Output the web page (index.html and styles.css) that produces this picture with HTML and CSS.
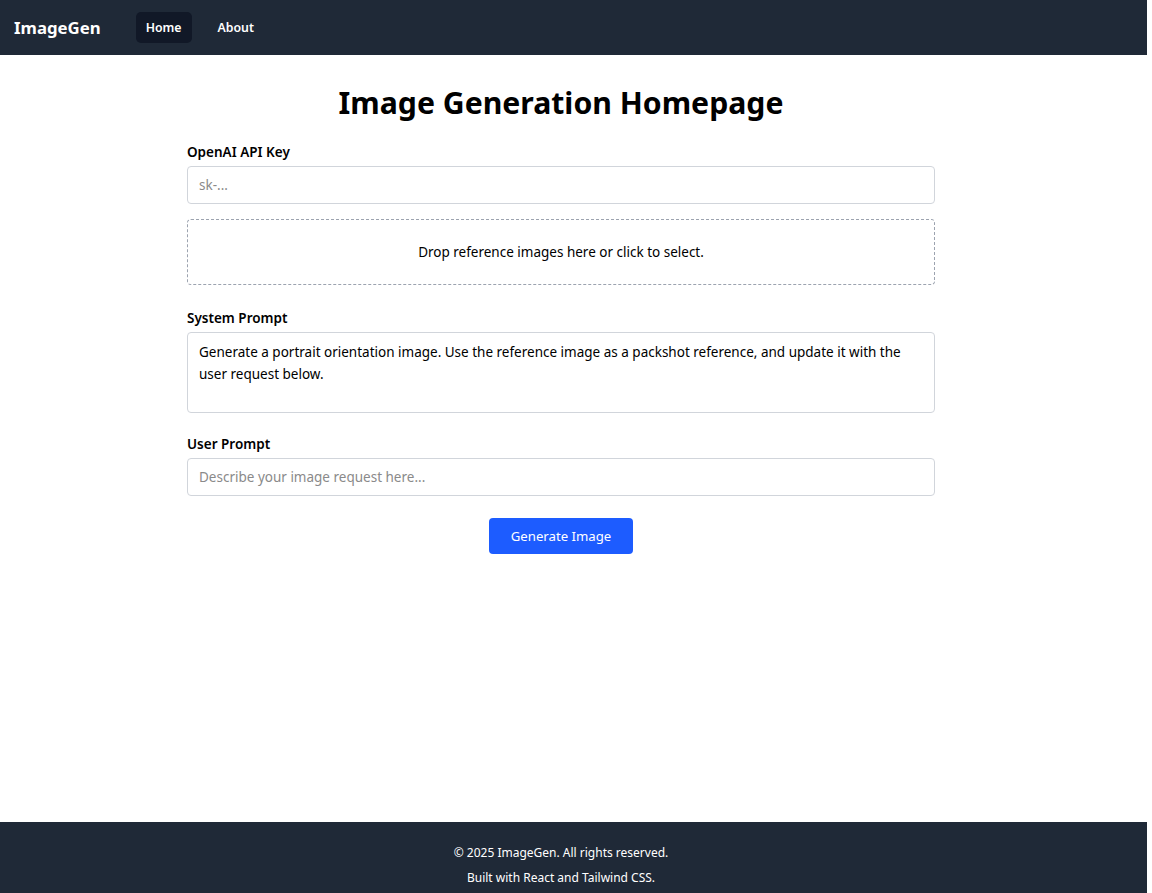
FILE: index.html
```html
<!DOCTYPE html>
<html lang="en">
<head>
<meta charset="utf-8">
<title>ImageGen</title>
<link rel="stylesheet" href="styles.css">
</head>
<body>
<div class="app">
  <header class="topbar">
    <div class="brand">ImageGen</div>
    <nav class="nav">
      <a class="nav-link active" href="#">Home</a>
      <a class="nav-link" href="#">About</a>
    </nav>
  </header>
  <main class="main">
    <h1 class="title">Image Generation Homepage</h1>
    <form class="form">
      <div class="field field-key">
        <label class="label">OpenAI API Key</label>
        <input class="input" type="text" placeholder="sk-...">
      </div>
      <div class="dropzone">Drop reference images here or click to select.</div>
      <div class="field field-system">
        <label class="label">System Prompt</label>
        <div class="textarea">Generate a portrait orientation image. Use the reference image as a packshot reference, and update it with the user request below.</div>
      </div>
      <div class="field field-user">
        <label class="label">User Prompt</label>
        <input class="input" type="text" placeholder="Describe your image request here...">
      </div>
      <div class="actions">
        <button type="button" class="btn">Generate Image</button>
      </div>
    </form>
  </main>
  <footer class="footer">
    <p>© 2025 ImageGen. All rights reserved.</p>
    <p>Built with React and Tailwind CSS.</p>
  </footer>
</div>
</body>
</html>
```

FILE: styles.css
```css
* { box-sizing: border-box; }
html, body { margin: 0; padding: 0; background: #fff; }
body {
  font-family: "Noto Sans", "Open Sans", sans-serif;
  color: #000;
  font-size: 13.5px;
}
.app {
  width: 1147px;
  min-height: 893px;
  display: flex;
  flex-direction: column;
}
.topbar {
  height: 55px;
  background: #1f2937;
  display: flex;
  align-items: center;
  padding: 0 14px;
}
.brand {
  color: #fff;
  font-weight: 700;
  font-size: 16.8px;
  margin-right: 35px;
}
.nav { display: flex; gap: 16px; }
.nav-link {
  color: #fff;
  text-decoration: none;
  font-size: 12.3px;
  font-weight: 600;
  padding: 6px 10px;
  border-radius: 5px;
  line-height: 19px;
}
.nav-link.active { background: #111827; }
.main {
  flex: 1;
  padding: 30px 25px 0 0;
  display: flex;
  flex-direction: column;
  align-items: center;
}
.title {
  margin: 0 0 21px;
  font-size: 30.2px;
  line-height: 36px;
  font-weight: 700;
  text-align: center;
}
.form { width: 748px; display: flex; flex-direction: column; }
.field { display: flex; flex-direction: column; }
.label {
  font-weight: 600;
  font-size: 13.5px;
  line-height: 20px;
  margin-bottom: 4px;
}
.input {
  height: 38px;
  border: 1px solid #d1d5db;
  border-radius: 4px;
  padding: 0 11px;
  font: inherit;
  font-size: 13.5px;
  color: #000;
}
.input::placeholder { color: #8a8a8a; }
.field-key { margin-bottom: 15px; }
.dropzone {
  height: 66px;
  border: 1px dashed #9ca3af;
  border-radius: 4px;
  display: flex;
  align-items: center;
  justify-content: center;
  font-size: 13.5px;
  margin-bottom: 23px;
}
.textarea {
  height: 81px;
  border: 1px solid #d1d5db;
  border-radius: 4px;
  padding: 8px 11px;
  line-height: 22px;
  font-size: 13.5px;
}
.field-system { margin-bottom: 21px; }
.actions { display: flex; justify-content: center; margin-top: 22px; }
.btn {
  width: 144px;
  height: 36px;
  background: #1d5cff;
  color: #fff;
  border: none;
  border-radius: 4px;
  font: inherit;
  font-size: 13.2px;
}
.footer {
  background: #1f2937;
  color: #fff;
  text-align: center;
  padding: 18px 25px 6px 0;
  height: 71px;
}
.footer p { margin: 0; font-size: 12px; line-height: 25px; }
```
